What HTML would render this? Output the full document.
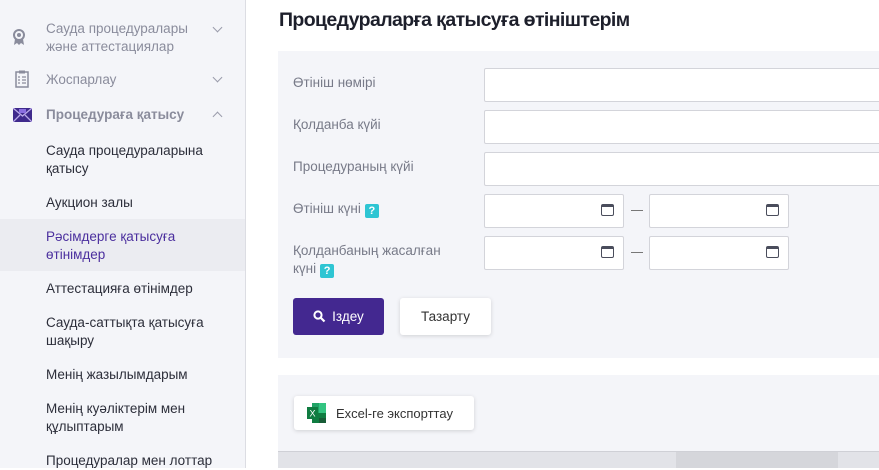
<!DOCTYPE html>
<html><head><meta charset="utf-8"><style>
*{margin:0;padding:0;box-sizing:border-box}
body{width:879px;height:468px;overflow:hidden;background:#fff;font-family:"Liberation Sans",sans-serif;position:relative;font-size:13px;color:#333}
.sb{position:absolute;left:0;top:0;width:246px;height:468px;background:#f4f5f9;border-right:1px solid #dcdde3}
.it{position:absolute;left:46px;color:#8a8c9c;font-size:13.5px;line-height:18px}
.sub{position:absolute;left:46px;color:#2c2e3a;font-size:13.5px;line-height:18px}
.chev{position:absolute;left:214px;width:7px;height:7px;border-right:1.5px solid #9a9cab;border-bottom:1.5px solid #9a9cab;transform:rotate(45deg)}
h1{position:absolute;left:279px;top:9px;font-size:19.5px;letter-spacing:-0.6px;font-weight:bold;color:#1d1f2b}
.panel{position:absolute;left:278px;width:601px;background:#f4f5f9}
.lbl{position:absolute;left:293px;color:#777a88;font-size:13.5px;line-height:18px}
.inp{position:absolute;background:#fff;border:1px solid #d3d4da;border-radius:2px}
.cal{position:absolute;width:13px;height:12px;border:1.5px solid #4a4d5c;border-top-width:3px;border-radius:2px}
.q{display:inline-block;width:14px;height:14px;background:#2ec5d3;color:#fff;font-size:11px;font-weight:bold;text-align:center;line-height:14px;border-radius:2px;vertical-align:-1px;margin-left:4px}
.dash{position:absolute;left:631px;width:12px;border-top:1px solid #777}
.btn{position:absolute;border-radius:3px;font-size:13.5px;display:flex;align-items:center;justify-content:center}
</style></head><body>
<div class="sb">
  <svg style="position:absolute;left:12px;top:29px" width="14" height="17" viewBox="0 0 14 17"><circle cx="7" cy="6" r="5" fill="none" stroke="#8a8c9c" stroke-width="2"/><circle cx="7" cy="6" r="2" fill="#8a8c9c"/><path d="M3 10 L2 16 L5 14 L7 16 L9 14 L12 16 L11 10" fill="#8a8c9c"/></svg>
  <div class="it" style="top:20px">Сауда процедуралары<br>және аттестациялар</div>
  <div class="chev" style="top:24px"></div>
  <svg style="position:absolute;left:15px;top:70px" width="14" height="18" viewBox="0 0 14 18"><rect x="1" y="2" width="12" height="15" fill="none" stroke="#8a8c9c" stroke-width="1.5"/><rect x="4" y="0.5" width="6" height="3" fill="#8a8c9c"/><path d="M3 7h2M7 7h4M3 10h2M7 10h4M3 13h2M7 13h4" stroke="#8a8c9c" stroke-width="1.3"/></svg>
  <div class="it" style="top:71px">Жоспарлау</div>
  <div class="chev" style="top:74px"></div>
  <svg style="position:absolute;left:13px;top:108px" width="19" height="14" viewBox="0 0 19 14"><rect width="19" height="14" fill="#3f2a8c"/><path d="M0 0 L9.5 8 L19 0 M0 14 L7 7 M19 14 L12 7" stroke="#b9a9e8" stroke-width="1.3" fill="none"/><rect x="6" y="1" width="7" height="4" fill="#8b6fe0"/></svg>
  <div class="it" style="top:106px;font-weight:bold">Процедураға қатысу</div>
  <div class="chev" style="top:113px;transform:rotate(-135deg)"></div>
  <div class="sub" style="top:142px">Сауда процедураларына<br>қатысу</div>
  <div class="sub" style="top:194px">Аукцион залы</div>
  <div style="position:absolute;left:0;top:219px;width:245px;height:52px;background:#ebecf1"></div>
  <div class="sub" style="top:228px;color:#4b2f9e">Рәсімдерге қатысуға<br>өтінімдер</div>
  <div class="sub" style="top:280px">Аттестацияға өтінімдер</div>
  <div class="sub" style="top:314px">Сауда-саттықта қатысуға<br>шақыру</div>
  <div class="sub" style="top:366px">Менің жазылымдарым</div>
  <div class="sub" style="top:400px">Менің куәліктерім мен<br>құлыптарым</div>
  <div class="sub" style="top:452px">Процедуралар мен лоттар</div>
</div>
<h1>Процедураларға қатысуға өтініштерім</h1>
<div class="panel" style="top:51px;height:307px"></div>
<div class="lbl" style="top:74px">Өтініш нөмірі</div>
<div class="inp" style="left:484px;top:68px;width:400px;height:34px"></div>
<div class="lbl" style="top:116px">Қолданба күйі</div>
<div class="inp" style="left:484px;top:110px;width:400px;height:34px"></div>
<div class="lbl" style="top:158px">Процедураның күйі</div>
<div class="inp" style="left:484px;top:152px;width:400px;height:34px"></div>
<div class="lbl" style="top:200px">Өтініш күні<span class="q">?</span></div>
<div class="inp" style="left:484px;top:194px;width:140px;height:34px"></div>
<div class="cal" style="left:601px;top:204px"></div>
<div class="dash" style="top:210px"></div>
<div class="inp" style="left:649px;top:194px;width:140px;height:34px"></div>
<div class="cal" style="left:766px;top:204px"></div>
<div class="lbl" style="top:242px">Қолданбаның жасалған<br>күні<span class="q">?</span></div>
<div class="inp" style="left:484px;top:236px;width:140px;height:34px"></div>
<div class="cal" style="left:601px;top:246px"></div>
<div class="dash" style="top:252px"></div>
<div class="inp" style="left:649px;top:236px;width:140px;height:34px"></div>
<div class="cal" style="left:766px;top:246px"></div>
<div class="btn" style="left:293px;top:298px;width:91px;height:37px;background:#432890;color:#fff"><svg width="13" height="13" viewBox="0 0 13 13" style="margin-right:6px"><circle cx="5" cy="5" r="3.6" fill="none" stroke="#fff" stroke-width="2"/><path d="M8 8l3.5 3.5" stroke="#fff" stroke-width="2.2"/></svg>Іздеу</div>
<div class="btn" style="left:400px;top:298px;width:91px;height:37px;background:#fff;color:#333;box-shadow:0 1px 4px rgba(0,0,0,.15)">Тазарту</div>
<div class="panel" style="top:375px;height:76px"></div>
<div class="btn" style="left:294px;top:396px;width:180px;height:34px;background:#fff;color:#333;box-shadow:0 1px 4px rgba(0,0,0,.15);font-size:13px;justify-content:flex-start;padding-left:13px">
<svg width="19" height="20" viewBox="0 0 19 20" style="margin-right:10px"><rect x="5" y="0" width="14" height="20" fill="#21a366"/><rect x="12" y="0" width="7" height="20" fill="#33c481"/><rect x="5" y="10" width="14" height="10" fill="#107c41"/><rect x="12" y="15" width="7" height="5" fill="#185c37"/><rect x="0" y="4" width="11" height="12" fill="#107c41"/><text x="5.5" y="13.5" font-size="9" fill="#fff" text-anchor="middle" font-family="Liberation Sans">X</text></svg>Excel-ге экспорттау</div>
<div style="position:absolute;left:278px;top:451px;width:601px;height:17px;background:#e2e3e8;border-top:1px solid #cfd0d6"></div>
<div style="position:absolute;left:676px;top:452px;width:162px;height:16px;background:#d5d6db"></div>
</body></html>
